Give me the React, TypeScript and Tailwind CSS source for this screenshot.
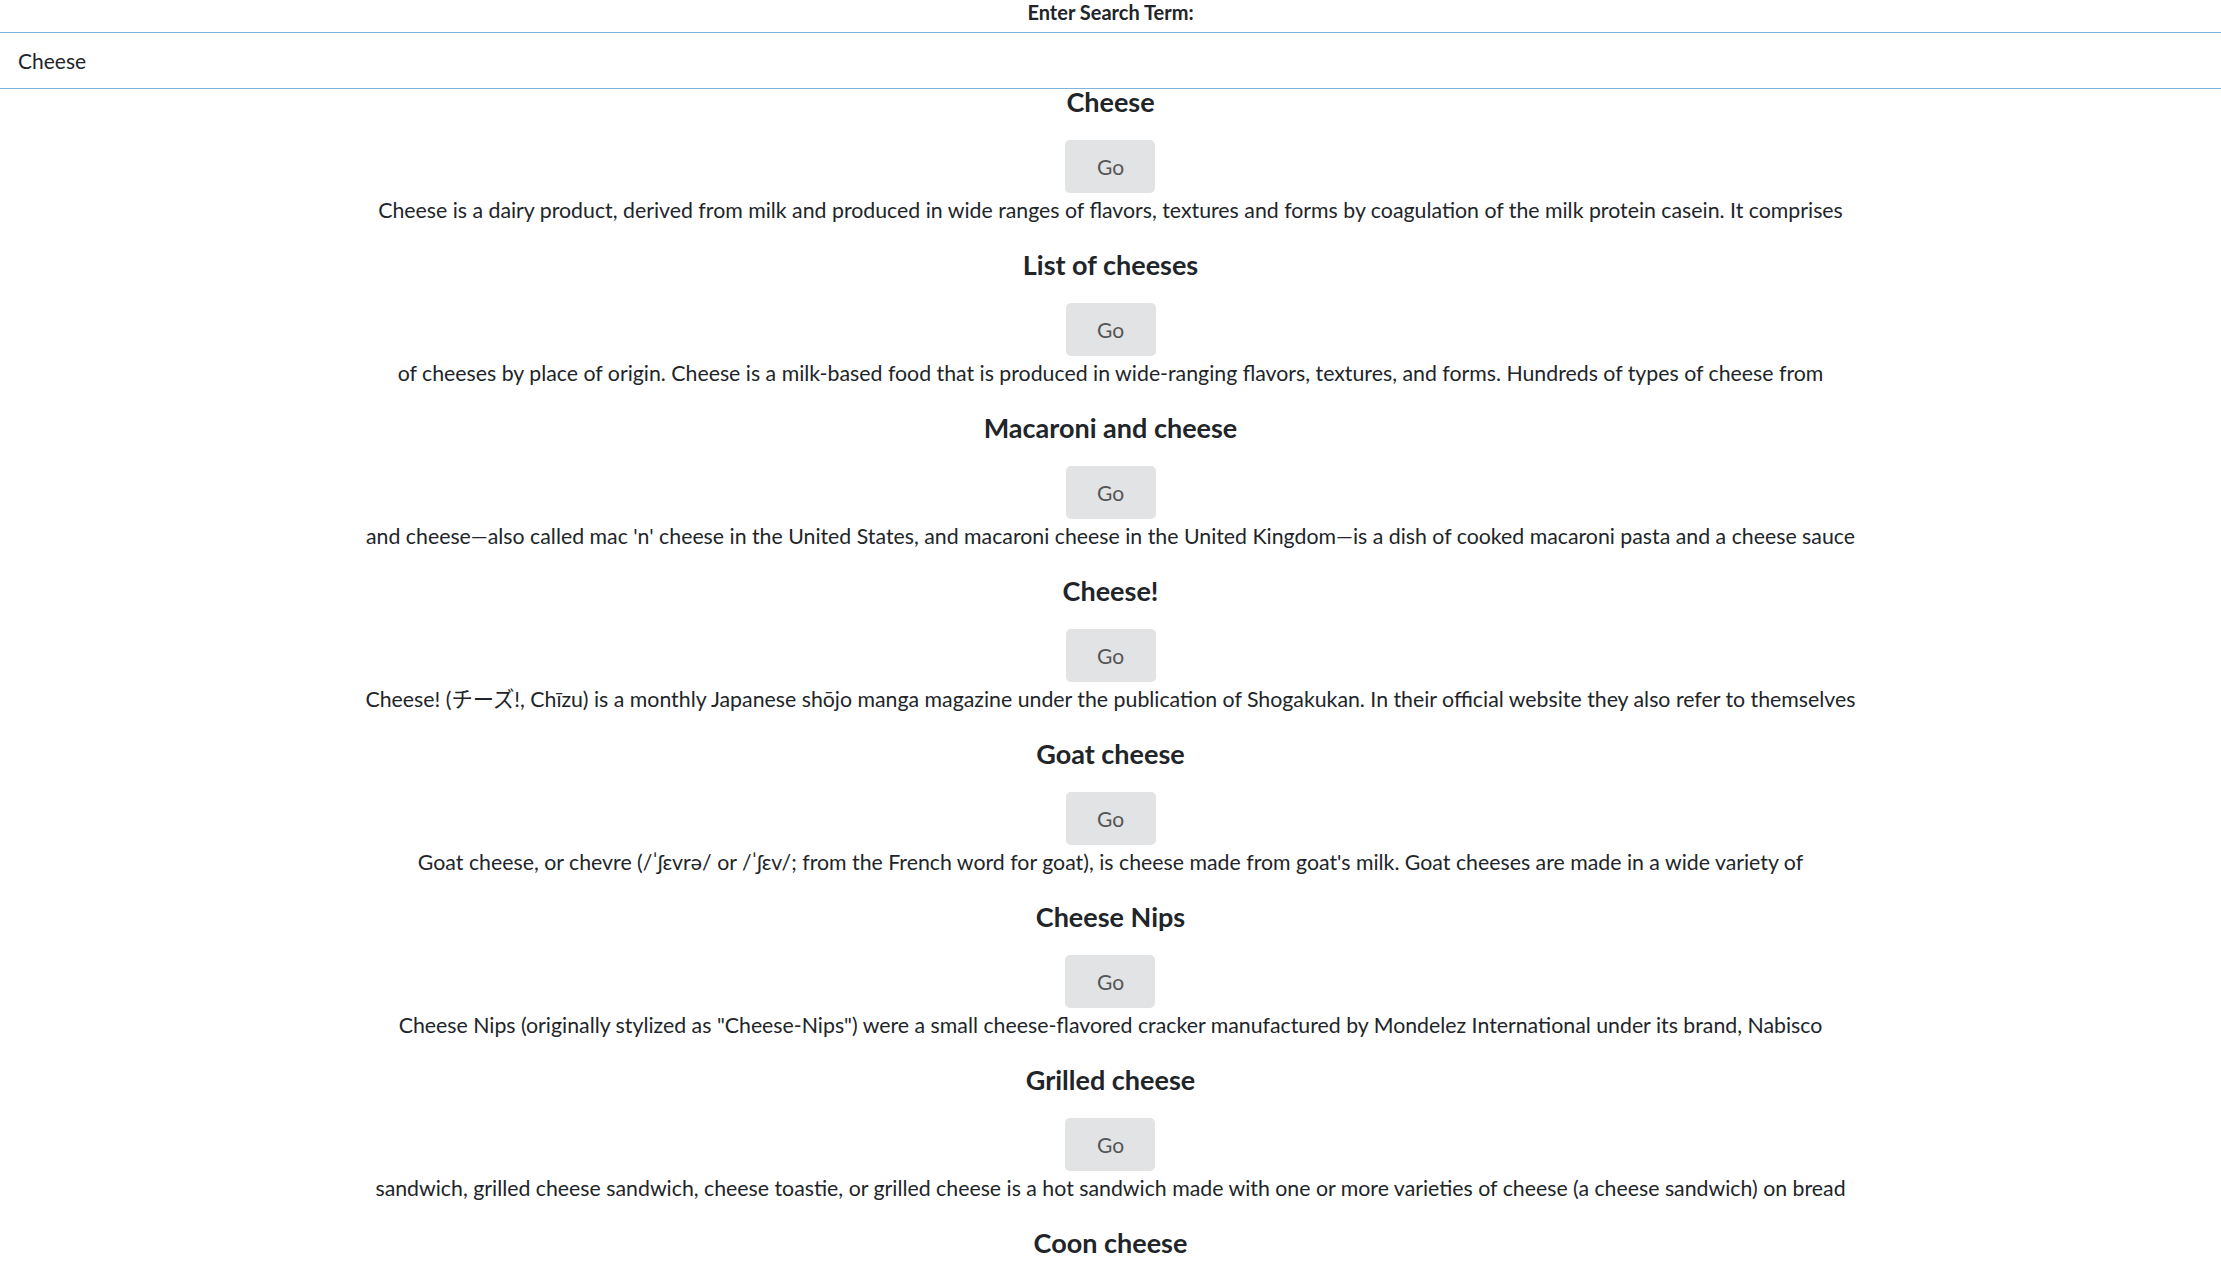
import React from "react";

const results = [
  {
    title: "Cheese",
    snippet:
      "Cheese is a dairy product, derived from milk and produced in wide ranges of flavors, textures and forms by coagulation of the milk protein casein. It comprises",
  },
  {
    title: "List of cheeses",
    snippet:
      "of cheeses by place of origin. Cheese is a milk-based food that is produced in wide-ranging flavors, textures, and forms. Hundreds of types of cheese from",
  },
  {
    title: "Macaroni and cheese",
    snippet:
      "and cheese\u2014also called mac 'n' cheese in the United States, and macaroni cheese in the United Kingdom\u2014is a dish of cooked macaroni pasta and a cheese sauce",
  },
  {
    title: "Cheese!",
    snippet:
      "Cheese! (\u30c1\u30fc\u30ba!, Ch\u012bzu) is a monthly Japanese sh\u014djo manga magazine under the publication of Shogakukan. In their official website they also refer to themselves",
  },
  {
    title: "Goat cheese",
    snippet:
      "Goat cheese, or chevre (/\u02c8\u0283\u025bvr\u0259/ or /\u02c8\u0283\u025bv/; from the French word for goat), is cheese made from goat's milk. Goat cheeses are made in a wide variety of",
  },
  {
    title: "Cheese Nips",
    snippet:
      'Cheese Nips (originally stylized as "Cheese-Nips") were a small cheese-flavored cracker manufactured by Mondelez International under its brand, Nabisco',
  },
  {
    title: "Grilled cheese",
    snippet:
      "sandwich, grilled cheese sandwich, cheese toastie, or grilled cheese is a hot sandwich made with one or more varieties of cheese (a cheese sandwich) on bread",
  },
  {
    title: "Coon cheese",
    snippet: "",
  },
];

export default function App() {
  return (
    <div className="min-h-screen bg-white text-[#212529] font-['Lato','Noto_Sans_CJK_JP',sans-serif]">
      <label className="block text-center text-[20px] font-bold leading-[25px] h-[32px]">
        Enter Search Term:
      </label>
      <input
        defaultValue="Cheese"
        className="block w-full h-[57px] border-y border-[#80b4dd] px-[18px] text-[21px] outline-none"
      />
      <div className="flex flex-col items-center">
        {results.map((r, i) => (
          <div key={i} className="flex flex-col items-center h-[163px]">
            <h3 className="text-[27px] font-bold leading-[26px]">{r.title}</h3>
            <button className="mt-[25px] w-[90px] h-[53px] rounded-[5px] bg-[#e2e3e5] text-[#555] text-[21px]">
              Go
            </button>
            <p className="mt-[3px] text-[21.3px] leading-[28px] whitespace-nowrap">{r.snippet}</p>
          </div>
        ))}
      </div>
    </div>
  );
}
